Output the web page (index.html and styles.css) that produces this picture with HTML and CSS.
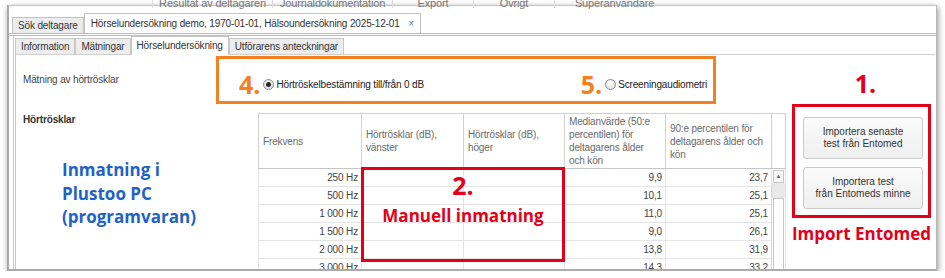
FILE: index.html
```html
<!DOCTYPE html>
<html lang="sv">
<head>
  <meta charset="UTF-8" />
  <meta name="viewport" content="width=device-width, initial-scale=1.0"/>
  <title>Hörselundersökning</title>
  <link rel="stylesheet" href="styles.css">
</head>
<body>
  <div class="window">
    <div class="menubar">
      <span class="menu-item">Resultat av deltagaren</span>
      <span class="menu-item">Journaldokumentation</span>
      <span class="menu-item narrow">Export</span>
      <span class="menu-item narrow">Övrigt</span>
      <span class="menu-item">Superanvändare</span>
    </div>

    <div class="doc-tabs">
      <div class="doc-tab">Sök deltagare</div>
      <div class="doc-tab active">Hörselundersökning demo, 1970-01-01, Hälsoundersökning 2025-12-01 <span class="close">×</span></div>
    </div>

    <div class="doc-body">
      <div class="sub-tabs">
        <div class="sub-tab">Information</div>
        <div class="sub-tab">Mätningar</div>
        <div class="sub-tab active">Hörselundersökning</div>
        <div class="sub-tab">Utförarens anteckningar</div>
      </div>

      <div class="panel">
        <div class="measure-label">Mätning av hörtrösklar</div>

        <!-- val av mätmetod -->
        <div class="mode-box">
          <div class="mode">
            <span class="step">4.</span>
            <span class="radio checked"></span>
            Hörtröskelbestämning till/från 0 dB
          </div>
          <div class="mode screening">
            <span class="step">5.</span>
            <span class="radio"></span>
            Screeningaudiometri
          </div>
        </div>

        <div class="step-one">1.</div>

        <div class="side">
          <div class="section-title">Hörtrösklar</div>
          <div class="note-blue">Inmatning i<br>Plustoo PC<br>(programvaran)</div>
        </div>

        <div class="table-wrap">
          <table class="thresholds">
            <colgroup>
              <col class="c-freq"><col class="c-left"><col class="c-right"><col class="c-median"><col class="c-p90"><col class="c-scroll">
            </colgroup>
            <thead>
              <tr>
                <th>Frekvens</th>
                <th>Hörtrösklar (dB), vänster</th>
                <th>Hörtrösklar (dB), höger</th>
                <th>Medianvärde (50:e percentilen) för deltagarens ålder och kön</th>
                <th>90:e percentilen för deltagarens ålder och kön</th>
                <th class="th-scroll"></th>
              </tr>
            </thead>
            <tbody>
              <tr><td>250 Hz</td><td></td><td></td><td>9,9</td><td>23,7</td>
                <td class="scroll" rowspan="8">
                  <div class="scroll-up">&#9650;</div>
                  <div class="scroll-track"></div>
                  <div class="scroll-thumb"></div>
                </td>
              </tr>
              <tr><td>500 Hz</td><td></td><td></td><td>10,1</td><td>25,1</td></tr>
              <tr><td>1 000 Hz</td><td></td><td></td><td>11,0</td><td>25,1</td></tr>
              <tr><td>1 500 Hz</td><td></td><td></td><td>9,0</td><td>26,1</td></tr>
              <tr><td>2 000 Hz</td><td></td><td></td><td>13,8</td><td>31,9</td></tr>
              <tr><td>3 000 Hz</td><td></td><td></td><td>14,3</td><td>33,2</td></tr>
              <tr><td>4 000 Hz</td><td></td><td></td><td>16,0</td><td>36,5</td></tr>
              <tr><td>6 000 Hz</td><td></td><td></td><td>19,2</td><td>41,0</td></tr>
            </tbody>
          </table>

          <div class="manual-box">
            <span class="step">2.</span>
            <span class="manual-text">Manuell inmatning</span>
          </div>
        </div>

        <div class="import">
          <div class="import-box">
            <button class="btn">Importera senaste<br>test från Entomed</button>
            <button class="btn">Importera test<br>från Entomeds minne</button>
          </div>
          <div class="import-label">Import Entomed</div>
        </div>
      </div>
    </div>
  </div>
</body>
</html>
```

FILE: styles.css
```css
body {
  margin: 0;
  background: #fff;
  font-family: "Liberation Sans", Arial, sans-serif;
  font-size: 10px;
  letter-spacing: -0.15px;
  color: #333;
  overflow: hidden;
}

.window {
  box-sizing: border-box;
  width: 930px;
  height: 266px;
  margin: 5px 0 0 7px;
  background: #fff;
  border-top: 1px solid #c4c4c4;
  border-left: 2px solid #a9a9a9;
  border-right: 1px solid #b9b9b9;
  border-bottom: 2px solid #ababab;
  box-shadow: 1px 2px 6px rgba(0, 0, 0, 0.45);
  display: flex;
  flex-direction: column;
}

/* huvudmeny, avskuren upptill */
.menubar {
  display: flex;
  height: 8px;
  margin-top: -6px;
  padding-left: 143px;
  font-size: 11px;
  line-height: 6px;
  color: #777;
}

.menu-item {
  width: 119px;
  text-align: center;
  border-left: 1px solid #ddd;
}

.menu-item.narrow {
  width: 80px;
}

.doc-tabs {
  display: flex;
  align-items: flex-end;
  height: 20px;
  margin-top: 5px;
  padding-left: 3px;
  border-bottom: 3px double #b9b9b9;
}

.doc-tab {
  height: 15px;
  line-height: 15px;
  padding: 0 5px;
  border: 1px solid #c3c3c3;
  border-bottom: none;
  background: #ececec;
}

.doc-tab.active {
  height: 19px;
  line-height: 19px;
  padding: 0 6px 0 6px;
  background: #fff;
}

.close {
  margin-left: 6px;
  color: #777;
}

.doc-body {
  flex: 1;
  min-height: 0;
  display: flex;
  flex-direction: column;
  margin: 0 1px 0 4px;
  padding-left: 1px;
  border-left: 1px solid #c8c8c8;
}

.sub-tabs {
  display: flex;
  align-items: flex-end;
  height: 18px;
  border-bottom: 1px solid #cfcfcf;
}

.sub-tab {
  height: 15px;
  line-height: 15px;
  padding: 0 5px;
  border: 1px solid #c8c8c8;
  border-bottom: none;
  background: #ededed;
}

.sub-tab.active {
  height: 18px;
  line-height: 17px;
  margin-bottom: -1px;
  background: #fff;
}

.panel {
  flex: 1;
  min-height: 0;
  overflow: hidden;
  border-left: 1px solid #c8c8c8;
  display: grid;
  grid-template-columns: 200px 42px 458px 69px 7px 139px 1fr;
  grid-template-rows: 49px 1fr;
  grid-template-areas:
    "lbl mode mode . . one ."
    "side side tbl tbl . imp .";
}

.measure-label {
  grid-area: lbl;
  padding: 19px 0 0 7px;
  line-height: 12px;
  color: #444;
}

.step {
  font-family: "Open Sans", sans-serif;
  font-weight: 700;
  font-size: 25px;
  line-height: 25px;
  letter-spacing: 0;
}

.mode-box {
  grid-area: mode;
  box-sizing: border-box;
  height: 48px;
  margin-top: 1px;
  padding: 8px 6px 0 20px;
  border: 3px solid #f5801f;
  display: flex;
  align-items: center;
}

.mode {
  display: flex;
  align-items: center;
  color: #222;
}

.mode .step {
  color: #f5801f;
  margin-right: 3px;
}

.mode.screening {
  margin-left: auto;
}

.radio {
  position: relative;
  box-sizing: border-box;
  width: 11px;
  height: 11px;
  margin-right: 2px;
  border: 1px solid #8d8d8d;
  border-radius: 50%;
  background: radial-gradient(circle at 40% 35%, #fff, #d6d6d6);
}

.radio.checked::after {
  content: "";
  position: absolute;
  left: 2px;
  top: 2px;
  width: 5px;
  height: 5px;
  border-radius: 50%;
  background: #2b2b2b;
}

.step-one {
  grid-area: one;
  padding: 16px 0 0 8px;
  text-align: center;
  color: #e2001a;
  font-family: "Open Sans", sans-serif;
  font-weight: 700;
  font-size: 25px;
  line-height: 25px;
  letter-spacing: 0;
}

.side {
  grid-area: side;
  padding-left: 7px;
}

.section-title {
  margin-top: 10px;
  line-height: 12px;
  font-weight: bold;
}

.note-blue {
  margin: 32px 0 0 39px;
  font-family: "Open Sans", sans-serif;
  font-weight: 700;
  font-size: 17px;
  line-height: 23.5px;
  letter-spacing: 0;
  color: #1f62c5;
}

.table-wrap {
  grid-area: tbl;
  position: relative;
  width: 527px;
  margin-top: 9px;
}

.thresholds {
  width: 527px;
  table-layout: fixed;
  border-collapse: collapse;
  border: 1px solid #c6c6c6;
}

.c-freq { width: 103px; }
.c-left { width: 102px; }
.c-right { width: 101px; }
.c-median { width: 101px; }
.c-p90 { width: 106px; }
.c-scroll { width: 14px; }

.thresholds th {
  height: 54px;
  padding: 0 3px 0 4px;
  border: 1px solid #d2d2d2;
  border-bottom-color: #c6c6c6;
  text-align: left;
  vertical-align: middle;
  font-weight: normal;
  line-height: 13px;
  color: #6a6a6a;
}

.thresholds td {
  height: 17px;
  padding: 0 3px 0 0;
  border: 1px solid #e4e4e4;
  text-align: right;
  line-height: 17px;
  color: #444;
  white-space: nowrap;
}

.thresholds td.scroll {
  padding: 0;
  vertical-align: top;
  background: #fff;
  border-left-color: #d6d6d6;
}

.scroll-up {
  height: 11px;
  margin: 1px 1px 0;
  border: 1px solid #c9c9c9;
  background: #f7f7f7;
  font-size: 6px;
  line-height: 11px;
  text-align: center;
  color: #666;
}

.scroll-track {
  height: 15px;
  background: #e9e9e9;
}

.scroll-thumb {
  height: 90px;
  margin: 0 1px;
  border: 1px solid #c6c6c6;
  background: #fff;
}

/* annotering ovanpå tabellen */
.manual-box {
  position: absolute;
  left: 103px;
  top: 54px;
  box-sizing: border-box;
  width: 204px;
  height: 95px;
  padding-top: 3px;
  border: 3px solid #e2001a;
  display: flex;
  flex-direction: column;
  align-items: center;
  color: #e2001a;
}

.manual-text {
  margin-top: 8px;
  font-family: "Open Sans", sans-serif;
  font-weight: 700;
  font-size: 17px;
  line-height: 20px;
  letter-spacing: 0;
}

.import {
  grid-area: imp;
}

.import-box {
  box-sizing: border-box;
  height: 114px;
  padding: 10px 5px 0 8px;
  border: 3px solid #e2001a;
  display: flex;
  flex-direction: column;
  gap: 8px;
}

.btn {
  width: 120px;
  height: 42px;
  padding: 0;
  border: 1px solid #c9c9c9;
  border-radius: 3px;
  background: linear-gradient(#fbfbfb, #efefef);
  font-family: "Liberation Sans", Arial, sans-serif;
  font-size: 10px;
  line-height: 12px;
  color: #333;
}

.import-label {
  margin: 5px -10px 0;
  white-space: nowrap;
  text-align: center;
  font-family: "Open Sans", sans-serif;
  font-weight: 700;
  font-size: 17px;
  line-height: 21px;
  letter-spacing: 0;
  color: #e2001a;
}
```
